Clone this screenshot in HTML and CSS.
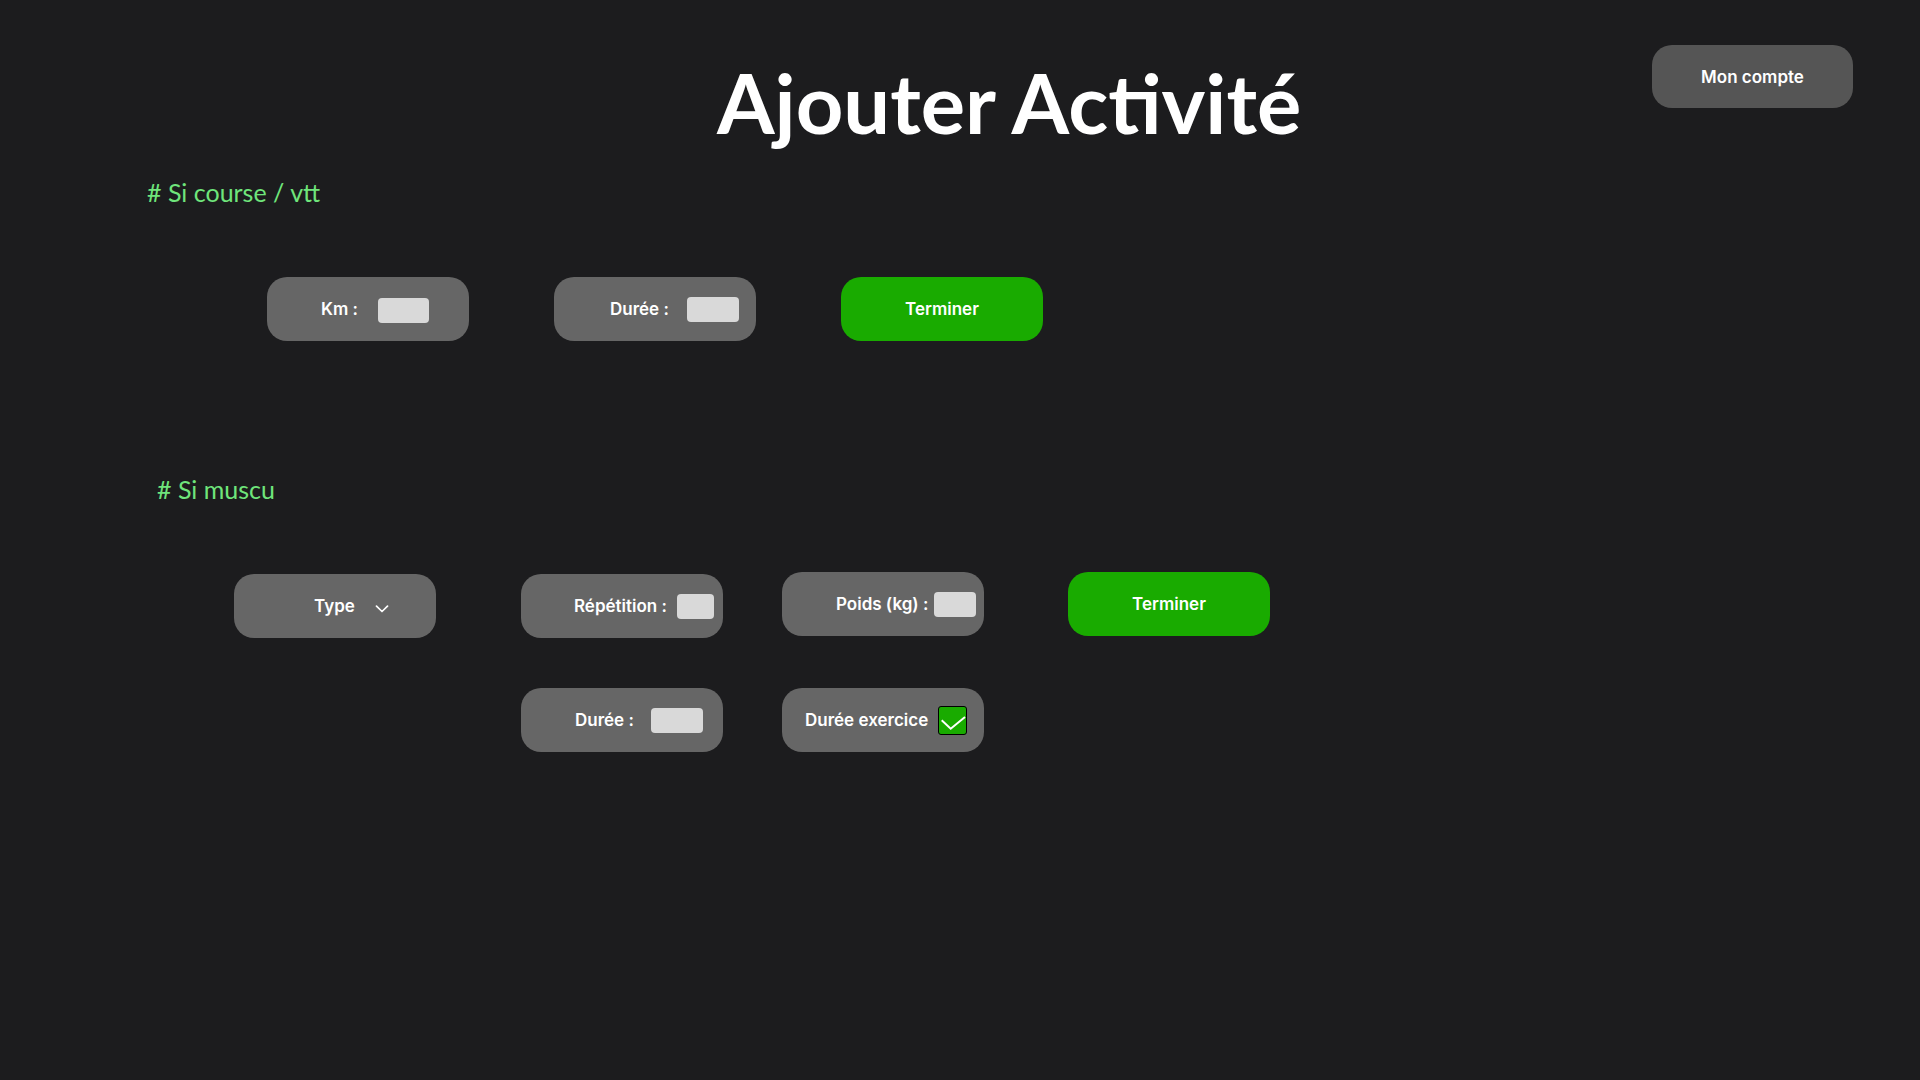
FILE: index.html
```html
<!DOCTYPE html>
<html lang="fr">
<head>
<meta charset="utf-8">
<title>Ajouter Activité</title>
<link rel="stylesheet" href="styles.css">
</head>
<body>
<div class="page">
  <header class="header">
    <h1 class="title">Ajouter Activité</h1>
    <button class="btn btn--account">Mon compte</button>
  </header>

  <section class="section section--course">
    <h2 class="section-title">#&nbsp;Si course / vtt</h2>
    <div class="row row--course">
      <label class="pill pill--km"><span>Km :</span><span class="input input--w51"></span></label>
      <label class="pill pill--duree1"><span>Durée :</span><span class="input input--w52"></span></label>
      <button class="btn btn--done">Terminer</button>
    </div>
  </section>

  <section class="section section--muscu">
    <h2 class="section-title section-title--muscu">#&nbsp;Si muscu</h2>
    <div class="grid">
      <div class="pill pill--type pill--low"><span>Type</span>
        <svg class="chevron" width="14" height="8" viewBox="0 0 14 8"><polyline points="1.5,1.2 7,6.5 12.5,1.2" fill="none" stroke="#fff" stroke-width="1.7" stroke-linecap="round" stroke-linejoin="round"/></svg>
      </div>
      <label class="pill pill--rep pill--low"><span>Répétition :</span><span class="input input--w37"></span></label>
      <label class="pill pill--poids"><span>Poids (kg) :</span><span class="input input--w42"></span></label>
      <button class="btn btn--done">Terminer</button>
      <div class="cell-empty"></div>
      <label class="pill pill--duree2"><span>Durée :</span><span class="input input--w52"></span></label>
      <label class="pill pill--exo"><span>Durée exercice</span>
        <span class="checkbox">
          <svg width="29" height="29" viewBox="0 0 29 29"><polyline points="3.7,14.3 12.7,22.7 27,11" fill="none" stroke="#fff" stroke-width="2" stroke-linejoin="miter"/></svg>
        </span>
      </label>
    </div>
  </section>
</div>
</body>
</html>
```

FILE: styles.css
```css
* { box-sizing: border-box; }

html, body {
  margin: 0;
  padding: 0;
  background: #1c1c1e;
}

body {
  width: 1920px;
  height: 1080px;
  overflow: hidden;
  font-family: Inter, "Noto Sans", sans-serif;
  color: #ffffff;
}

.header {
  display: flex;
  align-items: flex-start;
}

.title {
  margin: 61px 0 0 717px;
  font-family: Lato, "Noto Sans", sans-serif;
  font-weight: 700;
  font-size: 83px;
  line-height: 82px;
  color: #ffffff;
  white-space: nowrap;
}

.btn {
  border: none;
  font-family: Inter, "Noto Sans", sans-serif;
  font-weight: 600;
  font-size: 17px;
  color: #ffffff;
  border-radius: 20px;
  display: flex;
  align-items: center;
  justify-content: center;
  padding: 0;
  cursor: pointer;
}

.btn--account {
  margin: 45px 67px 0 auto;
  width: 201px;
  height: 63px;
  background: #555555;
}

.btn--done {
  width: 202px;
  height: 64px;
  background: #19ab00;
}

.section-title {
  margin: 37px 0 0 147px;
  font-family: Lato, "Noto Sans", sans-serif;
  font-weight: 400;
  font-size: 25px;
  line-height: 25px;
  color: #6fe57b;
}

.section-title--muscu {
  margin: 136px 0 0 157px;
}

.row--course {
  display: flex;
  gap: 85px;
  margin: 72px 0 0 267px;
}

.grid {
  display: grid;
  grid-template-columns: 287px 261px 286px 202px;
  grid-auto-rows: 64px;
  row-gap: 52px;
  margin: 70px 0 0 234px;
  align-items: start;
}

.pill {
  width: 202px;
  height: 64px;
  border-radius: 20px;
  background: #666666;
  display: flex;
  align-items: center;
  font-weight: 600;
  font-size: 17px;
  color: #ffffff;
  white-space: nowrap;
}

.pill--low { margin-top: 2px; }

.pill--km { padding-left: 54px; gap: 20px; }
.pill--duree1 { padding-left: 56px; gap: 18px; }
.pill--type { padding-left: 80px; gap: 20px; }
.pill--rep { padding-left: 53px; gap: 10px; }
.pill--poids { padding-left: 54px; gap: 6px; }
.pill--duree2 { padding-left: 54px; gap: 17px; }
.pill--exo { padding-left: 23px; gap: 10px; }

.chevron { margin-top: 6px; }

.input {
  display: block;
  height: 25px;
  border-radius: 4px;
  background: #d9d9d9;
}

.pill--km .input { margin-top: 3px; }

.input--w51 { width: 51px; }
.input--w52 { width: 52px; }
.input--w37 { width: 37px; }
.input--w42 { width: 42px; }

.checkbox {
  display: block;
  width: 29px;
  height: 29px;
  background: #19ab00;
  border: 1px solid #000000;
  border-radius: 3px;
  position: relative;
}

.checkbox svg {
  position: absolute;
  left: -1px;
  top: -1px;
}
```
